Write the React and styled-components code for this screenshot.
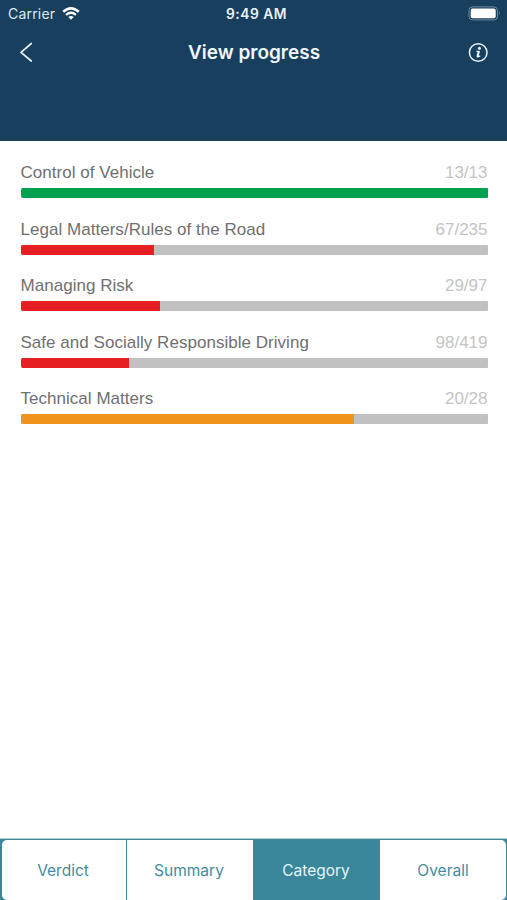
import React from "react";
import styled, { createGlobalStyle } from "styled-components";

const GlobalStyle = createGlobalStyle`
  * { box-sizing: border-box; }
  body { margin: 0; background: #fff; }
`;

const Screen = styled.div`
  width: 507px;
  height: 900px;
  display: flex;
  flex-direction: column;
  overflow: hidden;
  background: #fff;
  font-family: Inter, "Liberation Sans", sans-serif;
`;

const Header = styled.header`
  height: 141px;
  flex: none;
  background: #193f5e;
  color: #fff;
`;

const StatusBar = styled.div`
  height: 27px;
  display: grid;
  grid-template-columns: 1fr auto 1fr;
  align-items: center;
  padding: 0 6px 0 8px;
  font-size: 14px;
  line-height: 27px;
`;

const Carrier = styled.div`
  display: flex;
  align-items: center;
  gap: 7px;
  color: #dfeaf4;
  letter-spacing: 0.2px;
`;

const Clock = styled.div`
  padding: 2px 0 0 4px;
  font-weight: 600;
  font-size: 13.8px;
  line-height: 25px;
  letter-spacing: 0.5px;
  color: #eaf2fa;
`;

const BatterySlot = styled.div`
  display: flex;
  justify-content: flex-end;
`;

const NavBar = styled.nav`
  height: 50px;
  display: grid;
  grid-template-columns: 1fr auto 1fr;
  align-items: center;
  padding: 0 18px 0 19px;
`;

const Title = styled.h1`
  margin: 0;
  font-size: 19px;
  font-weight: 600;
  color: #eff7fd;
`;

const IconButton = styled.button`
  display: flex;
  padding: 0;
  border: 0;
  background: none;
  color: #e9f2fa;
  justify-self: ${(p) => p.$side};
`;

const List = styled.main`
  flex: 1;
  padding: 20px 19.5px 0 20.5px;
  font-family: "Liberation Sans", Arial, sans-serif;
`;

const Row = styled.section`
  height: 56.6px;
`;

const RowText = styled.div`
  display: flex;
  justify-content: space-between;
  height: 27px;
  font-size: 17px;
  line-height: 24px;
  white-space: nowrap;
`;

const Label = styled.span`
  color: #707070;
  letter-spacing: 0.03px;
`;

const Count = styled.span`
  color: #c4c4c4;
`;

const Track = styled.div`
  height: 10px;
  border-radius: 2px 1px 1px 2px;
  overflow: hidden;
  background: #c1c1c1;
`;

const Fill = styled.div`
  height: 100%;
  background: ${(p) => p.$color};
`;

const Tabs = styled.div`
  height: 62px;
  flex: none;
  display: grid;
  grid-template-columns: 124px 126px 126px 125px;
  column-gap: 1px;
  padding: 1px 0 0 2px;
  border-top: 1px solid #b5d2d9;
  background: #3b879a;
`;

const Tab = styled.button`
  border: 0;
  height: 60px;
  padding: 0 ${(p) => (p.$afterActive ? "0" : "2px")} 0 0;
  margin-left: ${(p) => (p.$afterActive ? "-1px" : "0")};
  background: ${(p) => (p.$active ? "#3b879a" : "#fff")};
  color: ${(p) => (p.$active ? "#e4f5fa" : "#468c9d")};
  border-radius: ${(p) => p.$radius || "0"};
  font: 400 15.5px Inter, sans-serif;
`;

const WifiIcon = () => (
  <svg width="18" height="14" viewBox="0 0 18 14" fill="none" stroke="#fff">
    <path d="M1.2 4.8Q9-2.1 16.8 4.8" strokeWidth="2.5" />
    <path d="M4 7.9Q9 3.6 14 7.9" strokeWidth="2.2" />
    <path d="M6.3 10.1Q9 7.8 11.7 10.1L9 12.8Z" fill="#fff" stroke="none" />
  </svg>
);

const BatteryIcon = () => (
  <svg width="33" height="15" viewBox="0 0 33 15">
    <rect x="1" y="0.9" width="28.5" height="13" rx="3.5" fill="none" stroke="#6f8ba1" />
    <rect x="2.7" y="2.6" width="25" height="9.6" rx="2" fill="#fff" />
    <path d="M31 5.2Q32.5 7.4 31 9.6Z" fill="#8299ab" />
  </svg>
);

const BackIcon = () => (
  <svg width="15" height="22" viewBox="0 0 15 22" fill="none" stroke="currentColor" strokeWidth="1.7" strokeLinecap="round" strokeLinejoin="round">
    <path d="M12.3 2.5L2 11.4L12.3 20" />
  </svg>
);

const InfoIcon = () => (
  <svg width="21" height="21" viewBox="0 0 21 21" fill="none" stroke="currentColor">
    <circle cx="10.2" cy="10.5" r="8.8" strokeWidth="1.5" />
    <circle cx="11.4" cy="6.2" r="1.5" fill="currentColor" stroke="none" />
    <path d="M8.4 9.3H11.1L9.5 15Q10.7 15 12.2 13.8" strokeWidth="1.2" />
    <path d="M10.8 9.4L9.3 14.7" strokeWidth="2" />
  </svg>
);

const RED = "#e51f23";
const categories = [
  { label: "Control of Vehicle", count: "13/13", percent: 100, color: "#03a04d" },
  { label: "Legal Matters/Rules of the Road", count: "67/235", percent: 28.5, color: RED },
  { label: "Managing Risk", count: "29/97", percent: 29.9, color: RED },
  { label: "Safe and Socially Responsible Driving", count: "98/419", percent: 23.3, color: RED },
  { label: "Technical Matters", count: "20/28", percent: 71.5, color: "#ef931d" },
];

export default function App() {
  return (
    <Screen>
      <GlobalStyle />
      <Header>
        <StatusBar>
          <Carrier>Carrier <WifiIcon /></Carrier>
          <Clock>9:49 AM</Clock>
          <BatterySlot><BatteryIcon /></BatterySlot>
        </StatusBar>
        <NavBar>
          <IconButton $side="start" aria-label="Back"><BackIcon /></IconButton>
          <Title>View progress</Title>
          <IconButton $side="end" aria-label="Information"><InfoIcon /></IconButton>
        </NavBar>
      </Header>
      <List>
        {categories.map((c) => (
          <Row key={c.label}>
            <RowText>
              <Label>{c.label}</Label>
              <Count>{c.count}</Count>
            </RowText>
            <Track><Fill $color={c.color} style={{ width: `${c.percent}%` }} /></Track>
          </Row>
        ))}
      </List>
      <Tabs>
        <Tab $radius="5px 0 0 5px">Verdict</Tab>
        <Tab>Summary</Tab>
        <Tab $active>Category</Tab>
        <Tab $afterActive $radius="0 5px 5px 0">Overall</Tab>
      </Tabs>
    </Screen>
  );
}
